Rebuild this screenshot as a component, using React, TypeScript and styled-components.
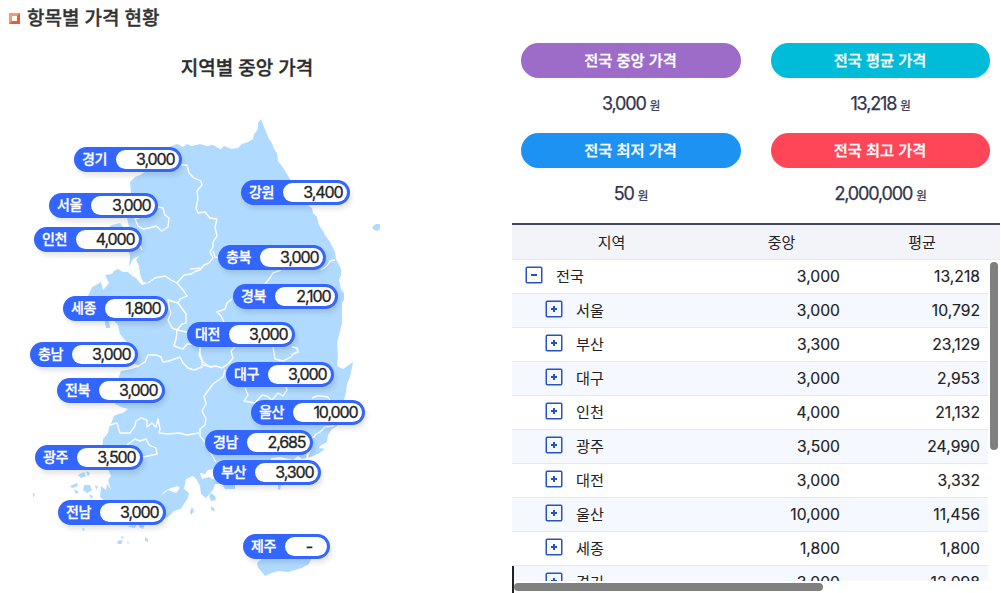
import React, { useState } from 'react';
import styled, { createGlobalStyle } from 'styled-components';

interface Region {
  name: string;
  price: string;
  left: number;
  top: number;
  width: number;
}

interface Row {
  name: string;
  median: string;
  average: string;
  root?: boolean;
}

const regions: Region[] = [
  { name: '경기', price: '3,000', left: 74, top: 147, width: 108 },
  { name: '서울', price: '3,000', left: 49, top: 193, width: 109 },
  { name: '인천', price: '4,000', left: 34, top: 227, width: 108 },
  { name: '강원', price: '3,400', left: 241, top: 180, width: 109 },
  { name: '충북', price: '3,000', left: 218, top: 245, width: 108 },
  { name: '경북', price: '2,100', left: 233, top: 284, width: 105 },
  { name: '세종', price: '1,800', left: 63, top: 296, width: 105 },
  { name: '대전', price: '3,000', left: 187, top: 322, width: 108 },
  { name: '충남', price: '3,000', left: 30, top: 342, width: 108 },
  { name: '대구', price: '3,000', left: 226, top: 362, width: 108 },
  { name: '전북', price: '3,000', left: 57, top: 378, width: 108 },
  { name: '울산', price: '10,000', left: 251, top: 400, width: 114 },
  { name: '경남', price: '2,685', left: 205, top: 430, width: 108 },
  { name: '광주', price: '3,500', left: 35, top: 445, width: 108 },
  { name: '부산', price: '3,300', left: 213, top: 460, width: 108 },
  { name: '전남', price: '3,000', left: 58, top: 500, width: 108 },
  { name: '제주', price: '-', left: 243, top: 534, width: 87 },
];

const summaries = [
  { label: '전국 중앙 가격', value: '3,000', color: '#9d6cc9' },
  { label: '전국 평균 가격', value: '13,218', color: '#00bcd8' },
  { label: '전국 최저 가격', value: '50', color: '#1c92f2' },
  { label: '전국 최고 가격', value: '2,000,000', color: '#ff4558' },
];

const rows: Row[] = [
  { name: '전국', median: '3,000', average: '13,218', root: true },
  { name: '서울', median: '3,000', average: '10,792' },
  { name: '부산', median: '3,300', average: '23,129' },
  { name: '대구', median: '3,000', average: '2,953' },
  { name: '인천', median: '4,000', average: '21,132' },
  { name: '광주', median: '3,500', average: '24,990' },
  { name: '대전', median: '3,000', average: '3,332' },
  { name: '울산', median: '10,000', average: '11,456' },
  { name: '세종', median: '1,800', average: '1,800' },
  { name: '경기', median: '3,000', average: '12,098' },
];

const GlobalStyle = createGlobalStyle`
  * {
    box-sizing: border-box;
  }

  body {
    margin: 0;
    background: #fff;
    color: #222;
    font-family: Inter, 'Noto Sans CJK KR', sans-serif;
    overflow: hidden;
  }
`;

const Page = styled.div`
  display: grid;
  grid-template-columns: 512px 488px;
  height: 593px;
  overflow: hidden;
`;

const LeftPanel = styled.section`
  display: flex;
  flex-direction: column;
`;

const PageTitle = styled.h2`
  display: flex;
  align-items: center;
  gap: 7px;
  height: 36px;
  margin: 0;
  padding-left: 9px;
  color: #333;
  font-size: 19px;
  font-weight: 500;
  -webkit-text-stroke: 0.35px #333;
  line-height: 37px;

  span {
    height: 36px;
  }
`;

const MapTitle = styled.h3`
  height: 64px;
  margin: 0;
  padding: 17px 18px 0 0;
  color: #2c2c2c;
  font-size: 19px;
  font-weight: 500;
  -webkit-text-stroke: 0.35px #2c2c2c;
  line-height: 32px;
  text-align: center;
`;

const MapCanvas = styled.div`
  position: relative;
  height: 493px;

  & > svg {
    display: block;
  }
`;

const Badge = styled.div<{ $left: number; $top: number; $width: number }>`
  position: absolute;
  left: ${({ $left }) => $left}px;
  top: ${({ $top }) => $top - 100}px;
  display: flex;
  width: ${({ $width }) => $width}px;
  height: 25px;
  padding: 3px;
  border-radius: 13px;
  background: #3366ff;
  box-shadow: 2px 4px 5px rgba(0, 0, 0, 0.1);
`;

const BadgeName = styled.span`
  width: 39px;
  padding-left: 5px;
  color: #fff;
  font-size: 14px;
  font-weight: 500;
  -webkit-text-stroke: 0.3px #fff;
  letter-spacing: -0.5px;
  line-height: 18px;
`;

const BadgePrice = styled.span<{ $empty: boolean }>`
  flex: 1;
  padding-right: ${({ $empty }) => ($empty ? 15 : 4.5)}px;
  border-radius: 10px;
  background: #fff;
  color: #222;
  font-size: 16px;
  letter-spacing: -1.1px;
  line-height: 19px;
  text-align: right;
  -webkit-text-stroke: 0.3px #222;
`;

const RightPanel = styled.section`
  display: flex;
  flex-direction: column;
`;

const SummaryGrid = styled.div`
  display: grid;
  grid-template-columns: 220px 219px;
  grid-auto-rows: 90px;
  column-gap: 30px;
  height: 223px;
  padding: 43px 0 0 9px;
`;

const Pill = styled.div<{ $color: string }>`
  height: 35px;
  padding-right: 1px;
  border-radius: 18px;
  background: ${({ $color }) => $color};
  color: #fff;
  font-size: 15.3px;
  font-weight: 500;
  -webkit-text-stroke: 0.3px #fff;
  line-height: 35px;
  text-align: center;
`;

const SummaryValue = styled.div`
  padding-right: 1px;
  color: #34344a;
  font-size: 18px;
  letter-spacing: -1.15px;
  line-height: 51px;
  text-align: center;
  -webkit-text-stroke: 0.25px #34344a;

  small {
    margin-left: 4px;
    font-size: 11.5px;
  }
`;

const Grid = styled.div`
  position: relative;
  flex: 1;
  border-top: 2px solid #44465c;
  overflow: hidden;
`;

const GridHead = styled.div`
  display: grid;
  grid-template-columns: 199px 141px 140px 8px;
  height: 35px;
  border-bottom: 1px solid #e6e8ec;
  background: #f3f4f9;
  color: #222;
  font-size: 15px;
  line-height: 35px;
  text-align: center;
`;

const GridBody = styled.div`
  width: 476px;
  height: 321px;
  overflow: hidden;
`;

const GridRow = styled.div<{ $alt: boolean }>`
  display: grid;
  grid-template-columns: 200px 140px 140px;
  height: 34px;
  border-bottom: 1px solid #e6e8ec;
  background: ${({ $alt }) => ($alt ? '#f5f8ff' : '#fff')};
`;

const NameCell = styled.div<{ $root: boolean }>`
  display: flex;
  align-items: flex-start;
  gap: 13px;
  padding-left: ${({ $root }) => ($root ? 13 : 33)}px;
  font-size: 15.2px;
  line-height: 34px;
`;

const ToggleButton = styled.button`
  display: flex;
  margin: 6px 0 0;
  padding: 0;
  border: 0;
  background: none;
`;

const NumberCell = styled.div`
  padding-right: 12px;
  font-size: 15.7px;
  line-height: 33px;
  text-align: right;
  -webkit-text-stroke: 0.15px #222;
`;

const FocusMark = styled.span`
  position: absolute;
  left: 0;
  bottom: 0;
  width: 2px;
  height: 27px;
  background: #222;
`;

const VerticalThumb = styled.span`
  position: absolute;
  top: 37px;
  right: 2px;
  width: 8px;
  height: 188px;
  border-radius: 4px;
  background: #808080;
`;

const HorizontalThumb = styled.span`
  position: absolute;
  left: 2px;
  bottom: 2px;
  width: 309px;
  height: 8px;
  border-radius: 4px;
  background: #808080;
`;

const TitleIcon = () => (
  <svg width="11" height="11" viewBox="0 0 11 11">
    <path d="M0 0h11v11H0z" fill="#ef5a31" />
    <path d="M0 0h11L8 3H3v5l-3 3z" fill="#fb9a69" />
    <path d="M3 3h5v5H3z" fill="#fff" />
  </svg>
);

const Toggle: React.FC<{ open: boolean; onClick: () => void }> = ({ open, onClick }) => (
  <ToggleButton onClick={onClick}>
    <svg width="18" height="18" viewBox="0 0 18 18" fill="none" stroke="#2452c7">
      <rect x="1.25" y="1.25" width="15.5" height="15.5" rx="1" strokeWidth="1.5" />
      <path d={open ? 'M6 9h6' : 'M6 9h6M9 6v6'} strokeWidth="2" />
    </svg>
  </ToggleButton>
);

const KoreaMap = () => (
  <svg width="500" height="493" viewBox="0 100 500 493">
    <g fill="#b0daff">
      {/* 본토 */}
      <path d="M261 119L264 127L267 134L269 139L272 143L274 149L277 153L278 161L284 169L290 179L296 189L304 199L309 206L312 208L313 213L317 217L319 225L323 231L325 235L330 242L335 252L336 259L341 269L341 275L339 280L341 289L344 293L344 300L342 303L342 323L337 343L338 357L337 366L343 369L353 362L350 377L347 384L346 392L344 400L340 412L337 426L332 429L328 435L327 442L320 446L316 455L308 458L311 449L307 451L306 458L302 459L298 456L293 460L280 457L271 458L270 463L278 468L266 476L258 474L249 480L240 479L235 483V489L225 489L222 484L215 484L213 469L208 470L205 474L200 473L202 479L209 477L216 481L213 490L206 498L201 494L200 486L197 480L193 476L186 479L184 489L189 493L188 498L184 504L181 509L174 511L169 516L164 519L154 513L151 503L156 497L163 494L168 490L176 493L180 488L178 486L171 488L165 491L160 496L154 501L143 505L137 514L126 516L119 520L111 516L104 512L106 502L100 497L101 486L106 490L107 484L111 490L108 480L111 476L108 469L110 460L102 452L103 439L108 433L109 428L112 421L114 416L118 414L123 413L128 409L121 407L115 404L118 389L119 376L121 371L132 369L140 366L132 363L135 352L125 340L120 334L118 325L115 322L113 313L98 313L91 305L88 296L92 287L96 285L101 282L103 290L109 283L105 275L112 274L114 271L118 269L123 272L128 272L131 275L136 278L142 285L148 283L143 282L140 274L139 266L136 260L139 256L133 259L129 267L130 256L128 249L133 245L136 238L129 227L127 218L136 209L130 201L131 193L130 182L135 177L140 175L145 172L153 162L160 149L169 147L177 144L183 147L187 144L192 146L200 144L207 146L213 145L218 148L221 149L224 146L231 149L238 148L242 144L248 142L253 139L254 134L256 132L258 128V123Z" />
      {/* 제주, 울릉 */}
      <path d="M257 563L264 557L278 548L304 547L312 557L309 564L302 568L288 572L278 571L272 573L265 576L261 571L258 568Z" />
      <path d="M372 227L376 224L380 224V229L377 231L374 230Z" />
      {/* 서남해 섬 */}
      <path d="M104 318L109 321L110 328L106 328ZM109 226l11-3 3 4-7 3zM137 505l4 4-2 5-4-4zM78 475l6-3 2 4-5 2zM86 471l4 2-2 4zM70 486l7-3 1 3-6 2zM74 489l5 3-3 2zM84 485l6 0 2 5-5 3-4-3zM89 494l4 2-2 3zM95 485l3 2-2 3zM33 493l2 1-2 4zM128 526l8-1-1 3-5-1zM140 523l5 1-2 5-4-2zM117 542l3-2 3 1-2 3-3 0zM121 536l3 1-2 2zM128 541l1 3-2-1zM145 537l3 2 0 3-3-1zM82 528l3 1-2 2zM192 507l2 4-3 4-1-3zM211 506l4 3-1 2-3-1zM211 493l4 3 1 4-5 1-2-5zM278 484l3 1-1 5-2-1zM313 452l7-4 5 1-7 5z" />
    </g>
    {/* 시도 경계 */}
    <g fill="none" stroke="#fff" strokeWidth="1.35" strokeLinejoin="round">
      <path d="M179 165L187 165L189 173L194 178L201 181L202 185L197 191L198 199L196 208L198 213L205 212L210 218L217 219L215 227L217 236L213 242L213 247L210 252L213 258L209 263L204 265L202 268L190 269M204 265L200 270L196 271L191 274L184 275L177 283L171 280L165 276L155 278L148 283" />
      <path d="M213 251L215 257L221 258" />
      <path d="M335 260L330 261L327 266L321 270M281 270L273 273L269 279L265 284M232 299L227 303L225 309L217 312L221 316L224 322M235 347L231 351L233 358L229 363L222 368L216 366L210 367L203 362L200 354V347" />
      <path d="M177 283L183 290L187 296L180 299L178 303L168 300L169 307L171 313L168 320L172 328L177 330L182 324L186 323L186 314L181 307L178 303M177 330L176 339L174 346L183 349L187 344L192 344L193 339M177 330L187 332" />
      <path d="M137 367L145 362L148 355L156 355L161 357L163 362L169 361L180 357L183 363L188 368L194 370L202 367L202 361L199 355L200 348M203 365L213 367" />
      <path d="M225 370L223 377L213 384L207 392L204 396L206 404L202 411L206 419L205 425L200 429V436L205 442L208 449L216 462" />
      <path d="M110 425L117 423L120 433L130 433L135 426L136 421L141 418L147 420L147 427L152 423L156 427L158 419L160 429L159 433L168 434L179 433L187 435L199 433" />
      <path d="M127 445L135 439L140 441L146 439L149 445L156 448L157 454L153 455L143 457L137 454" />
      <path d="M158 207L163 208L165 215L169 218L168 227L162 231L156 226L149 228L143 229L138 226L135 219L141 217M142 240L139 244L142 250" />
      <path d="M273 347L275 359L283 361L287 359L291 357L293 354L298 352L297 348L292 347M245 388L248 395L244 401L255 403L262 395L267 396L272 400L278 393L283 396L287 390L285 384" />
      <path d="M312 398L317 396L321 396L328 397L330 400M334 426L325 427L320 432L316 434L314 437L308 439" />
    </g>
  </svg>
);

const App: React.FC = () => {
  const [opened, setOpened] = useState<string[]>(['전국']);

  const toggle = (name: string) => {
    setOpened(prev => (prev.includes(name) ? prev.filter(n => n !== name) : [...prev, name]));
  };

  return (
    <>
      <GlobalStyle />
      <Page>
        <LeftPanel>
          <PageTitle>
            <TitleIcon />
            <span>항목별 가격 현황</span>
          </PageTitle>
          <MapTitle>지역별 중앙 가격</MapTitle>
          <MapCanvas>
            <KoreaMap />
            {regions.map(r => (
              <Badge key={r.name} $left={r.left} $top={r.top} $width={r.width}>
                <BadgeName>{r.name}</BadgeName>
                <BadgePrice $empty={r.price === '-'}>{r.price}</BadgePrice>
              </Badge>
            ))}
          </MapCanvas>
        </LeftPanel>

        <RightPanel>
          <SummaryGrid>
            {summaries.map(s => (
              <div key={s.label}>
                <Pill $color={s.color}>{s.label}</Pill>
                <SummaryValue>
                  {s.value}
                  <small>원</small>
                </SummaryValue>
              </div>
            ))}
          </SummaryGrid>

          <Grid>
            <GridHead>
              <span>지역</span>
              <span>중앙</span>
              <span>평균</span>
            </GridHead>
            <GridBody>
              {rows.map((row, i) => (
                <GridRow key={row.name} $alt={i % 2 === 1}>
                  <NameCell $root={!!row.root}>
                    <Toggle open={opened.includes(row.name)} onClick={() => toggle(row.name)} />
                    {row.name}
                  </NameCell>
                  <NumberCell>{row.median}</NumberCell>
                  <NumberCell>{row.average}</NumberCell>
                </GridRow>
              ))}
            </GridBody>
            <FocusMark />
            <VerticalThumb />
            <HorizontalThumb />
          </Grid>
        </RightPanel>
      </Page>
    </>
  );
};

export default App;
